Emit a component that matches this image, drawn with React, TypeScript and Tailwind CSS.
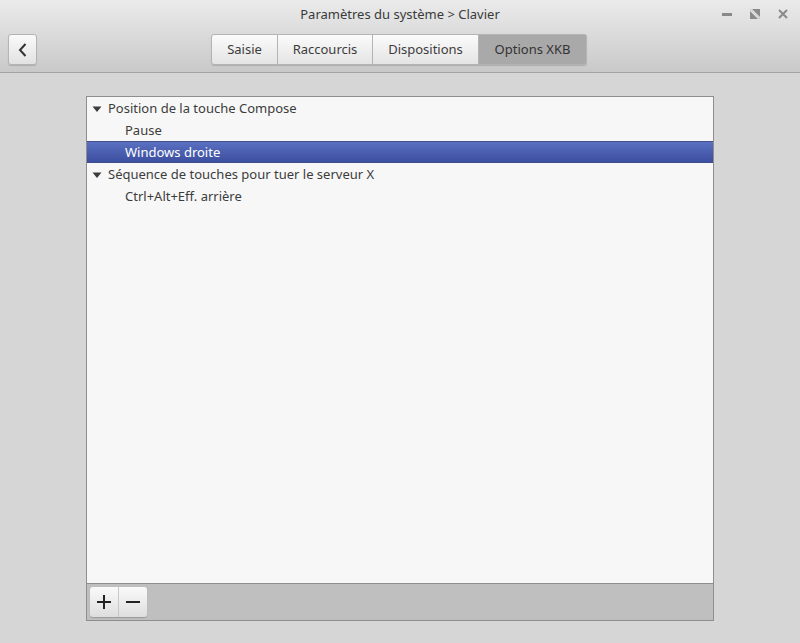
import React from "react";

const Tri = () => (
  <svg width="10" height="10" viewBox="0 0 10 10" className="shrink-0">
    <path d="M0.5 2.5 L9.5 2.5 L5 8 Z" fill="#3c3c3c" />
  </svg>
);

export default function App() {
  const tabs = ["Saisie", "Raccourcis", "Dispositions", "Options XKB"];
  return (
    <div
      className="w-[800px] h-[643px] flex flex-col bg-[#d6d6d6] text-[13px] text-[#3c3c3c] overflow-hidden"
      style={{ fontFamily: '"Noto Sans", "DejaVu Sans", sans-serif' }}
    >
      {/* header */}
      <div className="h-[73px] shrink-0 bg-gradient-to-b from-[#ebebeb] to-[#c9c9c9] border-b border-[#a3a3a3] flex flex-col">
        <div className="h-[30px] flex items-center relative">
          <div className="flex-1 text-center text-[#3a3a3a]">Paramètres du système &gt; Clavier</div>
          <div className="absolute right-[12px] top-[9px] flex items-center gap-[18px]">
            <svg width="10" height="10" viewBox="0 0 10 10">
              <rect x="0" y="4" width="10" height="3" fill="#8a8a8a" />
            </svg>
            <svg width="10" height="10" viewBox="0 0 10 10">
              <path d="M0 0 L10 0 L10 10 Z" fill="#8a8a8a" />
              <path d="M0 2 L0 10 L8 10 Z" fill="#8a8a8a" />
              <path d="M1 0 L10 9" stroke="#dedede" strokeWidth="1.5" />
            </svg>
            <svg width="10" height="10" viewBox="0 0 10 10">
              <path d="M1 1 L9 9 M9 1 L1 9" stroke="#8a8a8a" strokeWidth="2" />
            </svg>
          </div>
        </div>
        <div className="flex items-start pt-[4px] px-[8px]">
          <button className="w-[29px] h-[31px] rounded-[3px] border border-[#b4b4b4] bg-gradient-to-b from-[#fafafa] to-[#e2e2e2] shadow-[0_1px_1px_rgba(0,0,0,0.15)] flex items-center justify-center">
            <svg width="10" height="14" viewBox="0 0 10 14">
              <path d="M7.5 1 L2 7 L7.5 13" stroke="#333" strokeWidth="2" fill="none" />
            </svg>
          </button>
          <div className="flex ml-[174px] h-[31px] shadow-[0_1px_1px_rgba(0,0,0,0.15)] rounded-[3px]">
            {tabs.map((t, i) => {
              const active = i === 3;
              return (
                <div
                  key={t}
                  className={
                    "h-full flex items-center justify-center border border-[#b4b4b4] " +
                    (i > 0 ? "border-l-0 " : "rounded-l-[3px] ") +
                    (i === 3 ? "rounded-r-[3px] " : "") +
                    (active
                      ? "bg-[#a9a9a9] border-[#9a9a9a] text-[#333]"
                      : "bg-gradient-to-b from-[#fbfbfb] to-[#e4e4e4] text-[#3c3c3c]") +
                    (i === 0 ? " w-[67px]" : i === 1 ? " w-[95px]" : i === 2 ? " w-[106px]" : " w-[108px]")
                  }
                >
                  {t}
                </div>
              );
            })}
          </div>
        </div>
      </div>

      {/* body */}
      <div className="flex-1 pt-[23px] px-[86px]">
        <div className="w-[628px] h-[525px] border border-[#8e8e8e] flex flex-col bg-[#f7f7f7]">
          <div className="flex-1 flex flex-col">
            <div className="h-[22px] flex items-center pl-[5px] gap-[6px] pt-[1px]">
              <Tri />
              <span>Position de la touche Compose</span>
            </div>
            <div className="h-[22px] flex items-center pl-[38px] pt-[1px]">Pause</div>
            <div className="h-[22px] flex items-center pl-[38px] pt-[1px] text-white bg-gradient-to-b from-[#5b70c1] to-[#3c4e9f] border-y border-[#40508f]">
              Windows droite
            </div>
            <div className="h-[22px] flex items-center pl-[5px] gap-[6px] pt-[1px]">
              <Tri />
              <span>Séquence de touches pour tuer le serveur X</span>
            </div>
            <div className="h-[22px] flex items-center pl-[38px] pt-[1px]">Ctrl+Alt+Eff. arrière</div>
          </div>
          <div className="h-[37px] border-t border-[#8e8e8e] bg-[#bfbfbf] flex items-start pt-[3px] pl-[3px]">
            <div className="flex rounded-[3px] shadow-[0_1px_1px_rgba(0,0,0,0.2)]">
              <button className="w-[29px] h-[30px] rounded-l-[3px] bg-gradient-to-b from-[#fafafa] to-[#dedede] border-r border-[#c8c8c8] flex items-center justify-center">
                <svg width="16" height="16" viewBox="0 0 16 16">
                  <path d="M8 1 V15 M1 8 H15" stroke="#222" strokeWidth="2" />
                </svg>
              </button>
              <button className="w-[28px] h-[30px] rounded-r-[3px] bg-gradient-to-b from-[#fafafa] to-[#dedede] flex items-center justify-center">
                <svg width="16" height="16" viewBox="0 0 16 16">
                  <path d="M1 8 H15" stroke="#222" strokeWidth="2" />
                </svg>
              </button>
            </div>
          </div>
        </div>
      </div>
    </div>
  );
}
